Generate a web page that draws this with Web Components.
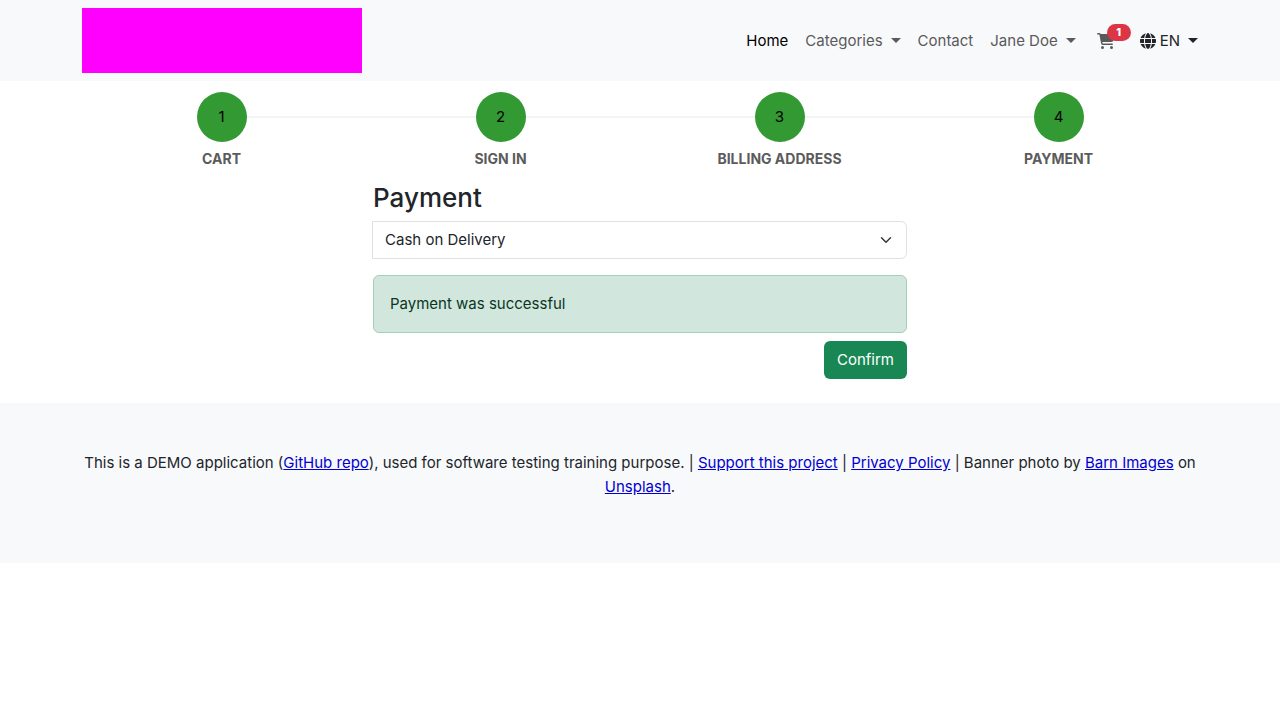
<!DOCTYPE html>
<html lang="en">
<head>
<meta charset="utf-8">
<meta name="viewport" content="width=device-width, initial-scale=1">
<title>Payment</title>
<style>
  body {
    margin: 0;
    background: #fff;
    color: #212529;
    font-family: Inter, "Liberation Sans", sans-serif;
    font-size: 15px;
    line-height: 24px;
  }
</style>
</head>
<body>
<shop-page></shop-page>

<script>
const define = (name, html, setup) => {
  const template = document.createElement('template');
  template.innerHTML = html;
  customElements.define(name, class extends HTMLElement {
    constructor() {
      super();
      this.attachShadow({ mode: 'open' }).append(template.content.cloneNode(true));
    }
    connectedCallback() {
      if (setup) setup(this, this.shadowRoot);
    }
  });
};

define('nav-link', `
  <style>
    :host { display: block; }
    a { display: block; padding: 8px; color: #595a5c; text-decoration: none; white-space: nowrap; }
    :host([active]) a { color: #000; }
  </style>
  <a href="#"><slot></slot></a>`);

define('nav-menu', `
  <style>
    :host { display: block; color: #595a5c; }
    :host([dark]) { color: #212529; }
    button {
      display: flex; align-items: center; gap: 8px;
      padding: 8px; border: 0; background: none;
      font: inherit; color: inherit; white-space: nowrap; cursor: pointer;
    }
    :host([dark]) button { padding-right: 0; }
    .caret { border: 5px solid transparent; border-top-color: currentColor; border-bottom: 0; }
    .label { display: flex; align-items: center; gap: 4px; }
  </style>
  <button type="button" aria-haspopup="true"><span class="label"><slot></slot></span><span class="caret"></span></button>`);

define('cart-link', `
  <style>
    :host { display: block; }
    a { position: relative; display: block; padding: 12px 16px 12px 12px; color: #595a5c; text-decoration: none; }
    svg { display: block; width: 18px; height: 16px; fill: currentColor; }
    span {
      position: absolute; top: 3px; right: 0;
      width: 24px; border-radius: 9px; background: #dc3545; color: #fff;
      font-size: 11px; font-weight: 800; line-height: 17px; text-align: center;
    }
  </style>
  <a href="#" aria-label="Cart">
    <svg viewBox="0 0 576 512"><path d="M0 24C0 10.7 10.7 0 24 0H69.5c22 0 41.5 12.8 50.6 32h411c26.3 0 45.5 25 38.6 50.4l-41 152.3c-8.5 31.4-37 53.3-69.5 53.3H170.7l5.4 28.5c2.2 11.3 12.1 19.5 23.6 19.5H488c13.3 0 24 10.7 24 24s-10.7 24-24 24H199.7c-34.6 0-64.3-24.6-70.7-58.5L77.4 54.5c-.7-3.8-4-6.5-7.9-6.5H24C10.7 48 0 37.3 0 24zM128 464a48 48 0 1 1 96 0 48 48 0 1 1 -96 0zm336-48a48 48 0 1 1 0 96 48 48 0 1 1 0-96z"/></svg>
    <span><slot></slot></span>
  </a>`);

define('globe-icon', `
  <style>
    :host { display: block; }
    svg { display: block; width: 16px; height: 16px; fill: currentColor; }
  </style>
  <svg viewBox="0 0 512 512" aria-hidden="true"><path d="M352 256c0 22.2-1.2 43.6-3.3 64H163.3c-2.2-20.4-3.3-41.8-3.3-64s1.2-43.6 3.3-64H348.7c2.2 20.4 3.3 41.8 3.3 64zm28.8-64H503.9c5.3 20.5 8.1 41.9 8.1 64s-2.8 43.5-8.1 64H380.8c2.1-20.6 3.2-42 3.2-64s-1.1-43.4-3.2-64zm112.6-32H376.7c-10-63.9-29.8-117.4-55.3-151.6c78.3 20.7 142 77.5 171.9 151.6zm-149.1 0H167.7c6.1-36.4 15.5-68.6 27-94.7c10.5-23.6 22.2-40.7 33.5-51.5C239.4 3.2 248.7 0 256 0s16.6 3.2 27.8 13.8c11.3 10.8 23 27.9 33.5 51.5c11.6 26 20.9 58.2 27 94.7zm-209 0H18.6C48.6 85.9 112.2 29.1 190.6 8.4C165.1 42.6 145.3 96.1 135.3 160zM8.1 192H131.2c-2.1 20.6-3.2 42-3.2 64s1.1 43.4 3.2 64H8.1C2.8 299.5 0 278.1 0 256s2.8-43.5 8.1-64zM194.7 446.6c-11.6-26-20.9-58.2-27-94.6H344.3c-6.1 36.4-15.5 68.6-27 94.6c-10.5 23.6-22.2 40.7-33.5 51.5C272.6 508.8 263.3 512 256 512s-16.6-3.2-27.8-13.8c-11.3-10.8-23-27.9-33.5-51.5zM135.3 352c10 63.9 29.8 117.4 55.3 151.6C112.2 482.9 48.6 426.1 18.6 352H135.3zm358.1 0c-30 74.1-93.6 130.9-171.9 151.6c25.5-34.2 45.2-87.7 55.3-151.6H493.4z"/></svg>`);

define('site-header', `
  <style>
    :host { display: block; background: #f8f9fb; }
    nav {
      display: flex; align-items: center; justify-content: space-between;
      box-sizing: border-box; max-width: 1140px; margin: 0 auto; padding: 8px 12px;
    }
    .brand { display: block; width: 280px; height: 65px; background: #f0f; }
    .links { display: flex; align-items: center; gap: 1px; }
  </style>
  <nav aria-label="Main">
    <a class="brand" href="#" aria-label="Shop home"></a>
    <div class="links"><slot></slot></div>
  </nav>`);

define('checkout-step', `
  <style>
    :host { display: flex; flex-direction: column; align-items: center; flex: 1 1 0; gap: 5px; }
    .row { display: flex; align-items: center; align-self: stretch; }
    .line { flex: 1; height: 2px; background: #f3f4f5; }
    :host([first]) .before, :host([last]) .after { background: none; }
    .dot {
      width: 50px; border-radius: 50%; background: #393; color: #000;
      line-height: 50px; text-align: center;
    }
    .name { color: #5b5b5b; font-size: 14px; font-weight: 700; text-transform: uppercase; }
  </style>
  <div class="row"><span class="line before"></span><span class="dot"></span><span class="line after"></span></div>
  <div class="name"><slot></slot></div>`,
  (host, root) => { root.querySelector('.dot').textContent = host.getAttribute('number'); });

define('checkout-steps', `
  <style>
    :host { display: flex; box-sizing: border-box; max-width: 1140px; margin: 0 auto; padding: 11px 12px 0; }
  </style>
  <slot></slot>`);

define('alert-success', `
  <style>
    :host {
      display: block; padding: 16px; border: 1px solid #a3cfbb; border-radius: 6px;
      background: #d1e7dd; color: #0a3622;
    }
  </style>
  <slot></slot>`);

define('payment-form', `
  <style>
    :host { display: block; box-sizing: border-box; width: 50%; max-width: 558px; margin: 0 auto; padding: 10px 12px 24px; }
    h3 { margin: 0 0 6px; font-size: 26px; font-weight: 500; line-height: 34px; }
    form { display: flex; flex-direction: column; }
    select {
      appearance: none; height: 38px; margin: 0 0 16px -1px; padding: 0 36px 0 12px;
      border: 1px solid #dee2e6; border-radius: 0 6px 6px 0; color: inherit; font: inherit;
      background: #fff url("data:image/svg+xml,%3Csvg xmlns='http://www.w3.org/2000/svg' viewBox='0 0 16 16'%3E%3Cpath fill='none' stroke='%23343a40' stroke-linecap='round' stroke-linejoin='round' stroke-width='2' d='m2 5 6 6 6-6'/%3E%3C/svg%3E") no-repeat right 14px center / 12px 12px;
    }
    button {
      align-self: flex-end; margin-top: 8px; padding: 7px 13px; border: 0; border-radius: 6px;
      background: #198754; color: #fff; font: inherit; cursor: pointer;
    }
  </style>
  <h3 id="title">Payment</h3>
  <form>
    <select aria-labelledby="title"><option>Cash on Delivery</option></select>
    <alert-success role="status">Payment was successful</alert-success>
    <button type="button">Confirm</button>
  </form>`);

define('site-footer', `
  <style>
    :host { display: block; padding: 48px 0; background: #f8f9fb; }
    p { max-width: 1140px; margin: 0 auto 16px; text-align: center; }
    a { color: #0000d0; text-decoration: underline; }
  </style>
  <p>This is a DEMO application (<a href="#">GitHub repo</a>), used for software testing training purpose. | <a href="#">Support this project</a> | <a href="#">Privacy Policy</a> | Banner photo by <a href="#">Barn Images</a> on <a href="#">Unsplash</a>.</p>`);

define('shop-page', `
  <style>:host { display: block; } header, main, footer { display: block; }</style>
  <header>
    <site-header>
      <nav-link active>Home</nav-link>
      <nav-menu>Categories</nav-menu>
      <nav-link>Contact</nav-link>
      <nav-menu>Jane Doe</nav-menu>
      <cart-link>1</cart-link>
      <nav-menu dark><globe-icon></globe-icon>EN</nav-menu>
    </site-header>
  </header>
  <main>
    <checkout-steps>
      <checkout-step number="1" first>Cart</checkout-step>
      <checkout-step number="2">Sign in</checkout-step>
      <checkout-step number="3">Billing Address</checkout-step>
      <checkout-step number="4" last>Payment</checkout-step>
    </checkout-steps>
    <payment-form></payment-form>
  </main>
  <footer><site-footer></site-footer></footer>`);
</script>
</body>
</html>
